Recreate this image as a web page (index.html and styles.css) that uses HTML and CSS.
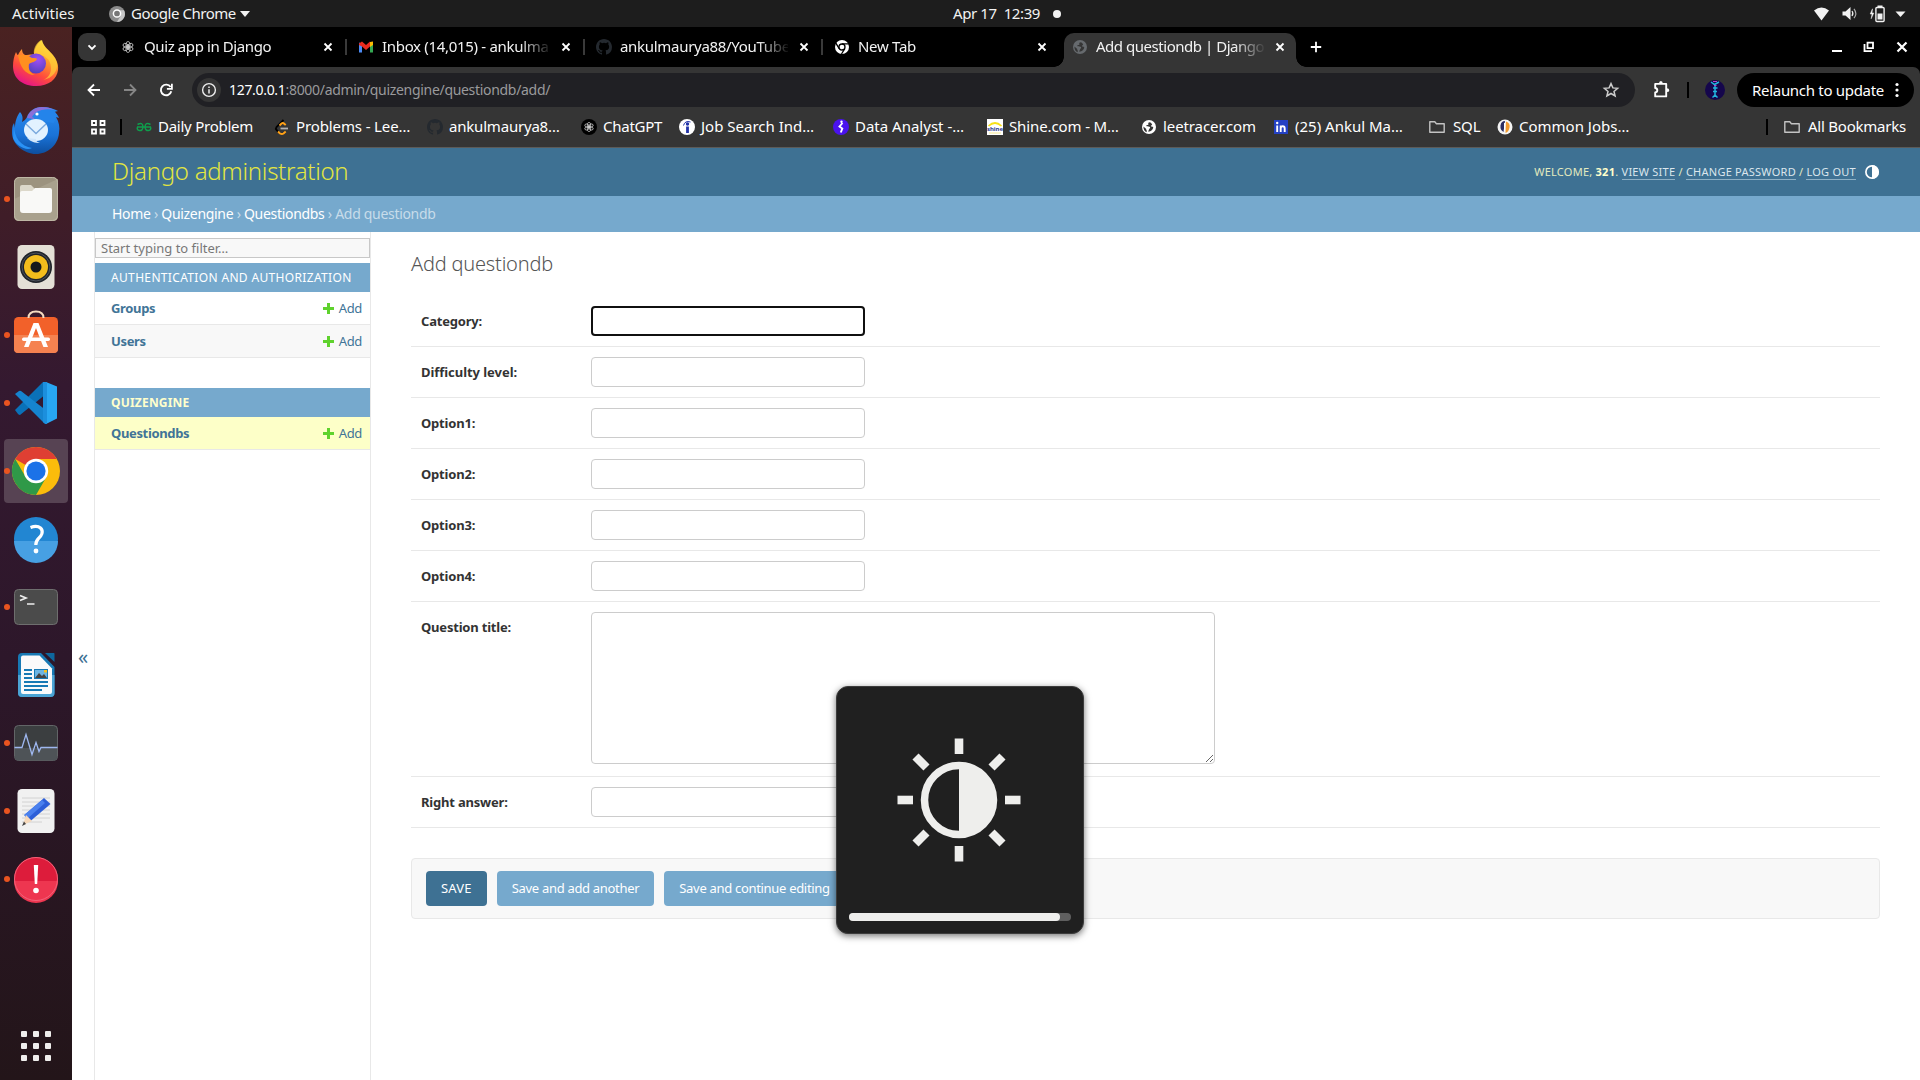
FILE: index.html
```html
<!DOCTYPE html>
<html lang="en">
<head>
<meta charset="utf-8">
<title>Add questiondb | Django site admin</title>
<link rel="stylesheet" href="styles.css">
</head>
<body>
<svg width="0" height="0" class="defs" aria-hidden="true">
  <defs>
    <linearGradient id="ffBody" x1="0.8" y1="0" x2="0.3" y2="1"><stop offset="0" stop-color="#fff44f"/><stop offset=".35" stop-color="#ffa52a"/><stop offset=".7" stop-color="#ff4a3d"/><stop offset="1" stop-color="#e3128b"/></linearGradient>
    <radialGradient id="ffCore" cx=".6" cy=".3" r=".8"><stop offset="0" stop-color="#a04ff5"/><stop offset="1" stop-color="#4a3fb5"/></radialGradient>
    <linearGradient id="tbBody" x1="0" y1="0" x2="0" y2="1"><stop offset="0" stop-color="#2a8cf0"/><stop offset=".6" stop-color="#1a73d8"/><stop offset="1" stop-color="#0d4e9e"/></linearGradient>
    <symbol id="gpt" viewBox="0 0 16 16"><g fill="none" stroke="currentColor" stroke-width="1"><ellipse cx="8" cy="5.200" rx="2.500" ry="4"/><ellipse cx="8" cy="5.200" rx="2.500" ry="4" transform="rotate(60 8 8)"/><ellipse cx="8" cy="5.200" rx="2.500" ry="4" transform="rotate(120 8 8)"/><ellipse cx="8" cy="5.200" rx="2.500" ry="4" transform="rotate(180 8 8)"/><ellipse cx="8" cy="5.200" rx="2.500" ry="4" transform="rotate(240 8 8)"/><ellipse cx="8" cy="5.200" rx="2.500" ry="4" transform="rotate(300 8 8)"/></g></symbol>
    <symbol id="github" viewBox="0 0 16 16"><path fill="currentColor" d="M8 0C3.58 0 0 3.58 0 8c0 3.54 2.29 6.53 5.47 7.59.4.07.55-.17.55-.38v-1.49c-2.01.37-2.53-.49-2.69-.94-.09-.23-.48-.94-.82-1.13-.28-.15-.68-.52-.01-.53.63-.01 1.08.58 1.23.82.72 1.21 1.87.87 2.33.66.07-.52.28-.87.51-1.07-1.78-.2-3.64-.89-3.64-3.95 0-.87.31-1.59.82-2.15-.08-.2-.36-1.02.08-2.12 0 0 .67-.21 2.2.82a7.6 7.6 0 0 1 4 0c1.53-1.04 2.2-.82 2.2-.82.44 1.1.16 1.92.08 2.12.51.56.82 1.27.82 2.15 0 3.07-1.87 3.75-3.65 3.95.29.25.54.73.54 1.48v2.2c0 .21.15.46.55.38A8 8 0 0 0 16 8c0-4.42-3.58-8-8-8z"/></symbol>
    <symbol id="globe" viewBox="0 0 16 16"><circle cx="8" cy="8" r="7" fill="currentColor"/><path class="globe-land" d="M9 3.2c-1.700 0-2 1-1.600 1.700.4.700-.4 1.100-1.400 1.100-.8 0-.8.900-.3 1.300.8.600 2.800 0 3.300.800.500.8-.2 1.300-.700 1.900-.5.600-.5 1.700-1.300 2.500.3.200 2.500.3 4-1.500.9-1.100 1.200-2 1.200-3-.6-.4-1.700-.3-2.200-.8-.5-.5.300-1.300 1.200-1.300-.4-1.300-1.200-2.200-2.200-2.700z"/><path class="globe-land" d="M2.400 7.500l2.600 2.200c.4.400 0 1.200.7 1.600v1.900c-2-.8-3.400-2.800-3.300-5.700z"/></symbol>
    <symbol id="folder" viewBox="0 0 16 16"><path d="M.8 3v10.200h14.400V4.700H7.400L5.800 2.800H.8z" fill="none" stroke="currentColor" stroke-width="1.400" stroke-linejoin="round"/></symbol>
    <symbol id="cross" viewBox="0 0 16 16"><path d="M4.500 4.500l7 7M11.500 4.500l-7 7" stroke="currentColor" stroke-width="1.800"/></symbol>
    <symbol id="plus" viewBox="0 0 11 11"><path d="M4 0h3v4h4v3H7v4H4V7H0V4h4z" fill="#5fd22d"/></symbol>
  </defs>
</svg>

<header class="panel">
  <span class="activities">Activities</span>
  <svg class="panel-app" viewBox="0 0 16 16"><circle cx="8" cy="8" r="8" fill="#8b8b8b"/><path d="M8 4.200h7a8 8 0 0 1-7 11.800l3.500-6z" fill="#c4c4c4"/><circle cx="8" cy="7.500" r="3.600" fill="#777" stroke="#fff" stroke-width="1.500"/></svg>
  <span class="app-name">Google Chrome</span>
  <svg class="panel-caret" viewBox="0 0 10 6"><path d="M0 0h10L5 6z" fill="#f2f2f2"/></svg>
  <span class="clock">Apr 17&nbsp; 12:39</span>
  <span class="notice"></span>
  <svg class="sys-icons" viewBox="0 0 94 18">
    <g fill="#f2f2f2"><path d="M0 5.500Q7.500-.5 15 5.500L7.500 15.500z"/><path d="M28.500 6.500h3l5-4.500v13l-5-4.500h-3z"/><path d="M58.500 3.800l-2.300 5.200h1.800l-.8 4.700 2.600-5.700h-1.800z" stroke="#f2f2f2" stroke-width=".5"/><path d="M63.500 8.500h5v6h-5zM63.500 .5h5V2h-5z"/><path d="M81.500 6.500h10L86.500 12z"/></g>
    <g fill="none" stroke="#f2f2f2"><path d="M38 6q1.800 2.500 0 5" stroke-width="1.200"/><path d="M40 3.800q3.600 4.700 0 9.400" stroke="#aaa" stroke-width="1.200"/><rect x="61.900" y="2.500" width="8.200" height="14" rx="1" stroke-width="1.400"/></g>
  </svg>
</header>

<div class="desktop">
<nav class="dock">
  <div class="launcher"><svg viewBox="0 0 48 48"><path d="M4 13c1 2 1 3 2 3 1-2 2-4 4-6 0 3 1 5 3 6 4 0 7-1 9 0 0-6 3-12 8-15 1 6 6 9 10 14 3 4 7 9 6 16-1 9-9 16-22 16S1 40 1 27c0-5 1-10 3-14z" fill="url(#ffBody)"/><path d="M29 1c-5 3-8 9-7 14 10 0 17 5 17 14 0 6-3 10-8 12 10-2 15-9 14-17-1-10-12-11-16-23z" fill="#ffd53a" opacity=".65"/><circle cx="24" cy="24.500" r="10" fill="url(#ffCore)"/><path d="M6 16c5-1 11 0 14 3 3 0 5 0 5 1-1 3-5 3-8 5-1 5 1 9 6 11-10 0-15-8-17-20z" fill="#ff8f20"/></svg></div>
  <div class="launcher"><svg viewBox="0 0 48 48"><path d="M8 5c3 3 3 7 2 10 2-1 4-3 5-5C17 4 23 0 30 0c7 0 12 2 16 4l-4 1c2 1 4 3 5 6l-3-1c3 5 4 10 3 16-1 12-11 21-23 21S0 37 0 26c0-4 0-7 2-10l1 5C3 14 5 9 8 5z" fill="url(#tbBody)"/><path d="M15 11c2-7 8-11 15-11 5 0 9 1 12 3-9-2-15 0-20 9z" fill="#8a6fd8"/><path d="M20 10c3-6 10-9 22-7l3 5-3 8-14-2z" fill="#2484ea"/><ellipse cx="24" cy="23" rx="12" ry="11" fill="#e2f2ff"/><path d="M14 17l10 9.500L34 17" fill="none" stroke="#7aa9dd" stroke-width="1.400"/><path d="M15 31c4 4 8 5 13 5-3-1-4-2-4-4z" fill="#d0e6fb"/><circle cx="25" cy="7" r="1.600" fill="#fff"/><path d="M2 18c0 13 7 21 18 23-6 3-16-2-19-10z" fill="#2a92f5"/></svg></div>
  <div class="launcher running"><svg viewBox="0 0 48 48"><rect x="2" y="2" width="44" height="44" rx="5" fill="#9c937f"/><path d="M2 24L46 4v37q0 5-5 5H7q-5 0-5-5z" fill="#a9a18d"/><rect x="2.500" y="2.500" width="43" height="43" rx="5" fill="none" stroke="#bfb8a6"/><path d="M8 12q0-2 2-2h9l4 4v6H8z" fill="#dcd8ca"/><path d="M8 18q0-2 2-2h10l3-3h15q2 0 2 2v20q0 3-3 3H11q-3 0-3-3z" fill="#f9f9f7"/></svg></div>
  <div class="launcher"><svg viewBox="0 0 48 48"><rect x="5.500" y="2" width="37" height="44" rx="4.500" fill="#e4e0d6"/><circle cx="24" cy="24" r="16" fill="#20242a"/><circle cx="24" cy="24" r="14" fill="none" stroke="#4d535c"/><circle cx="24" cy="24" r="12" fill="#f3bd1c"/><circle cx="24" cy="24" r="5.500" fill="#17191c"/></svg></div>
  <div class="launcher running"><svg viewBox="0 0 48 48"><rect x="2" y="6" width="44" height="36" rx="4.500" fill="#f2612a" /><path d="M2 24h44v14q0 4-4 4H6q-4 0-4-4z" fill="#f58250"/><path d="M16.500 7q0-6.500 7.500-6.500T31.500 7" fill="none" stroke="#f6dcc0" stroke-width="2"/><path d="M21.500 12h5l9.500 24h-4.600L24 17l-7.400 19H12z" fill="#fff"/><rect x="10" y="26.500" width="28" height="3.500" rx="1.700" fill="#fff"/></svg></div>
  <div class="launcher running"><svg viewBox="0 0 48 48"><path d="M3 31l28-28 3 12-26 21q-1 0-2-1z" fill="#0a71b8"/><path d="M3 15l4-3q1-.5 2 0l26 20-3 12z" fill="#1584cf"/><path d="M34 3l11 4.500v32L34 45V3z" fill="#28a7f3"/><path d="M31 3h4v42h-2l-2-2z" fill="#1c8fdd"/></svg></div>
  <div class="launcher running focused"><svg viewBox="0 0 48 48"><circle cx="24" cy="24" r="24" fill="#fbbc0b"/><path d="M24 24L3.200 12A24 24 0 0 1 44.800 12H24z" fill="#df3f33"/><path d="M3.200 12A24 24 0 0 0 24 48l10.400-18L24 36 13.600 30z" fill="#2f9948"/><circle cx="24" cy="24" r="12.200" fill="#fff"/><circle cx="24" cy="24" r="9.600" fill="#1b72e8"/></svg></div>
  <div class="launcher"><svg viewBox="0 0 48 48"><circle cx="24" cy="24" r="22" fill="#2286d2"/><path d="M2 26a22 22 0 0 0 44 0z" fill="#47a0e3"/><path d="M18.500 12.500q6.500-2.500 10 .5c3.500 3.500 1 8-2 10.500-2 2-2.700 3-2.700 6.500" fill="none" stroke="#fff" stroke-width="3.200"/><circle cx="24" cy="36" r="2.400" fill="#fff"/></svg></div>
  <div class="launcher running"><svg viewBox="0 0 48 48"><rect x="2.500" y="6.500" width="43" height="35" rx="4" fill="#4b4b4b" stroke="#6e6e6e"/><path d="M8 12.500l6 2.500-6 2.500M15 21h7.500" fill="none" stroke="#eee" stroke-width="1.700"/></svg></div>
  <div class="launcher"><svg viewBox="0 0 48 48"><path d="M10 2h19l13.500 14v26q0 4-4 4H10q-4 0-4-4V6q0-4 4-4z" fill="#1779b4"/><path d="M33 2h9q.5 0 .5 1v8z" fill="#0e679e"/><path d="M6 24h36.500v18q0 4-4 4H10q-4 0-4-4z" fill="#4ba4d4"/><path d="M11 4.500h16.500L40 17.500V41q0 2-2 2H11q-2 0-2-2V6.500q0-2 2-2z" fill="#fafafa"/><path d="M12 19h8M12 23h8M12 27h8M12 31h24M12 35h24M12 39h18" stroke="#1779b4" stroke-width="1.900"/><rect x="22.500" y="18.500" width="13" height="9" fill="#6cb5e3" stroke="#1779b4"/><path d="M23 27l4-5 3 3 2-2 3 4z" fill="#444"/><rect x="32" y="19" width="3" height="2.500" fill="#f6c01d"/></svg></div>
  <div class="launcher running"><svg viewBox="0 0 48 48"><rect x="2.500" y="6.500" width="43" height="35" rx="4" fill="#3b3e40" stroke="#626567"/><path d="M3 29h42v9q0 3.500-4 3.500H7q-4 0-4-3.500z" fill="#4e5357"/><path d="M2.500 28.500H10l4-13 6 20 4-12 3 9 2-4h16.500" fill="none" stroke="#9eb7ef" stroke-width="1.300"/></svg></div>
  <div class="launcher running"><svg viewBox="0 0 48 48"><rect x="5.500" y="2" width="37" height="44" rx="4.500" fill="#f1f1f1"/><path d="M10 11h28M10 15h28M10 19h28M10 23h28M10 27h28M10 31h28M10 35h20" stroke="#d2d2d2"/><path d="M32 11l6.500 6-20 17-6-6z" fill="#2d5fd8"/><path d="M30 13l3 3-18 16-3-4z" fill="#4a80ee"/><path d="M14 28l6 6-9 4z" fill="#f6d9bb"/><path d="M12 34.500l2 2.500-4 2z" fill="#444"/></svg></div>
  <div class="launcher running"><svg viewBox="0 0 48 48"><circle cx="24" cy="24" r="22" fill="#dd1c3b"/><path d="M2 26a22 22 0 0 0 44 0z" fill="#ee3650"/><circle cx="24" cy="24" r="21.500" fill="none" stroke="#f2637a"/><path d="M21.800 10h4.400l-1 19h-2.400z" fill="#fff"/><circle cx="24" cy="35.500" r="2.800" fill="#fff"/></svg></div>
  <svg class="app-grid" viewBox="0 0 30 30"><g fill="#efeeec"><rect width="6" height="6" rx="1"/><rect x="12" width="6" height="6" rx="1"/><rect x="24" width="6" height="6" rx="1"/><rect y="12" width="6" height="6" rx="1"/><rect x="12" y="12" width="6" height="6" rx="1"/><rect x="24" y="12" width="6" height="6" rx="1"/><rect y="24" width="6" height="6" rx="1"/><rect x="12" y="24" width="6" height="6" rx="1"/><rect x="24" y="24" width="6" height="6" rx="1"/></g></svg>
</nav>

<div class="browser">
  <div class="tabstrip">
    <span class="tab-search"><svg viewBox="0 0 16 16"><path d="M4.500 6.300L8 9.800l3.500-3.500" fill="none" stroke="#fff" stroke-width="1.900"/></svg></span>
    <div class="tab"><svg class="fav pale"><use href="#gpt" x="1.500" y="1.500" width="13" height="13"/></svg><span class="tab-title t-quiz">Quiz app in Django</span><svg class="close"><use href="#cross"/></svg></div>
    <div class="tab"><svg class="fav" viewBox="0 0 16 16"><path d="M1 3v10.500h3V7z" fill="#4c8bf5"/><path d="M12 13.500h3V3l-3 4z" fill="#34a853"/><path d="M1 4.500L4 2.500l4 3.500 4-3.500v5L8 11 4 7.500 1 6z" fill="#ea2b1f"/><path d="M12 3l3-.5V6l-3 2z" fill="#fbbc04"/></svg><span class="tab-title t-inbox">Inbox (14,015) - ankulma</span><svg class="close"><use href="#cross"/></svg></div>
    <div class="tab"><svg class="fav ink"><use href="#github" width="16" height="16"/></svg><span class="tab-title t-yt">ankulmaurya88/YouTube</span><svg class="close"><use href="#cross"/></svg></div>
    <div class="tab last"><svg class="fav" viewBox="0 0 16 16"><circle cx="8" cy="8" r="7" fill="#fff"/><circle cx="8" cy="8" r="3" fill="#fff" stroke="#000" stroke-width="1.300"/><path d="M8 4.800h7M5.200 9.700L1.700 3.800M10.800 9.700L7.500 15" stroke="#000" stroke-width="1.300"/></svg><span class="tab-title t-new">New Tab</span><svg class="close"><use href="#cross"/></svg></div>
    <div class="tab active"><svg class="fav dim"><use href="#globe" width="16" height="16"/></svg><span class="tab-title t-add">Add questiondb | Django</span><svg class="close"><use href="#cross"/></svg></div>
    <svg class="newtab" viewBox="0 0 16 16"><path d="M8 2.800v10.400M2.800 8h10.400" stroke="#fff" stroke-width="1.800"/></svg>
    <svg class="winctl" viewBox="0 0 76 16"><path d="M1 12h10" stroke="#fff" stroke-width="2"/><path d="M36.500 3.700h5.500v5.500h-5.500z" fill="none" stroke="#fff" stroke-width="1.800"/><path d="M33.500 5v7.200h7.500" fill="none" stroke="#fff" stroke-width="1.800"/><path d="M66.500 3.500l9 9M75.500 3.500l-9 9" stroke="#fff" stroke-width="2.200"/></svg>
  </div>

  <div class="chrome-top">
    <div class="toolbar">
      <svg class="nav" viewBox="0 0 20 20"><path d="M16 10H5M10 4.500L4.500 10l5.500 5.500" fill="none" stroke="#fff" stroke-width="1.800"/></svg>
      <svg class="nav" viewBox="0 0 20 20"><path d="M4 10h11M10 4.500l5.500 5.500-5.500 5.500" fill="none" stroke="#868686" stroke-width="1.800"/></svg>
      <svg class="nav" viewBox="0 0 20 20"><path d="M14.600 7A5.300 5.300 0 1 0 15.300 11.300" fill="none" stroke="#fff" stroke-width="1.900"/><path d="M15.900 3.800v5h-5" fill="none" stroke="#fff" stroke-width="1.800"/></svg>
      <div class="omnibox">
        <span class="info"><svg viewBox="0 0 16 16"><circle cx="8" cy="8" r="6.400" fill="none" stroke="#eee" stroke-width="1.400"/><path d="M8 7.200v4.200M8 4.500v1.500" stroke="#eee" stroke-width="1.500"/></svg></span>
        <span class="url"><b>127.0.0.1</b>:8000/admin/quizengine/questiondb/add/</span>
        <svg class="star" viewBox="0 0 20 20"><path d="M10 3.600l1.900 4.300 4.700.4-3.600 3.100 1.100 4.600-4.100-2.500L5.900 16 7 11.400 3.400 8.300l4.700-.4z" fill="none" stroke="#ccc" stroke-width="1.500"/></svg>
      </div>
      <svg class="ext" viewBox="0 0 20 20"><path d="M4.200 3.900h11v12.500h-11v-4q2.100-.3 2.100-2.200T4.200 8z" fill="none" stroke="#fff" stroke-width="1.900" stroke-linejoin="round"/><path d="M8 3.700q0-2.600 1.900-2.600T11.800 3.700zM15.700 8.300q2.600 0 2.600 1.900t-2.600 1.900z" fill="#fff"/></svg>
      <span class="rule r-tool"></span>
      <svg class="avatar" viewBox="0 0 20 20"><circle cx="10" cy="10" r="10" fill="#15064c"/><path d="M6 2l3.500 2.500L14 2M10 4v13M8 8h4.500M8 11.500h4M7.500 17.500L10 15l2.500 2.500" stroke="#22b4dd" stroke-width="1.500" fill="none"/><path d="M8 1.500h4M9 5.500h2.500" stroke="#b645cf"/></svg>
      <span class="relaunch"><span>Relaunch to update</span><svg viewBox="0 0 4 16"><g fill="#fff"><circle cx="2" cy="2.500" r="1.600"/><circle cx="2" cy="8" r="1.600"/><circle cx="2" cy="13.500" r="1.600"/></g></svg></span>
    </div>

    <div class="bookmarks">
      <svg class="apps" viewBox="0 0 16 16"><path d="M2 2h4v4H2zM10.500 2h4v4h-4zM2 10.500h4v4H2zM10.500 10.500h4v4h-4z" fill="none" stroke="#fff" stroke-width="1.800"/></svg>
      <span class="rule r-apps"></span>
      <div class="bm b-daily"><svg viewBox="0 0 16 16"><path d="M1 8h14M1.500 5.500Q6.800 2.500 7 8q-.5 4-3.500 3.500T1.500 8M14.500 5.500Q9.200 2.500 9 8q.5 4 3.500 3.500T14.500 8" fill="none" stroke="#0f9d4c" stroke-width="1.500"/></svg><span>Daily Problem</span></div>
      <div class="bm b-lee"><svg viewBox="0 0 16 16"><path d="M9.500 1L2.500 8q-1.200 1.500 0 3l2 2" fill="none" stroke="#000" stroke-width="1.800"/><path d="M5.500 6.500l2-2q1.500-1 3 .5l1.200 1.200M4 12.500l2 2q2 1 3.500 0l2.200-2" fill="none" stroke="#ffa116" stroke-width="1.900"/><path d="M6.500 9.500H14" stroke="#b3b3b3" stroke-width="1.800"/></svg><span>Problems - Lee…</span></div>
      <div class="bm b-gh"><svg class="ink"><use href="#github" width="16" height="16"/></svg><span>ankulmaurya8…</span></div>
      <div class="bm b-gpt"><svg class="pale"><circle cx="8" cy="8" r="8" fill="#000"/><use href="#gpt" x="2.500" y="2.500" width="11" height="11"/></svg><span>ChatGPT</span></div>
      <div class="bm b-job"><svg viewBox="0 0 16 16"><circle cx="8" cy="8" r="8" fill="#fff"/><circle cx="8.500" cy="5" r="1.700" fill="#2132a8"/><path d="M8.500 7.500V14" stroke="#2132a8" stroke-width="2.800"/><path d="M4.500 6.500Q6 1.200 11.500 3" fill="none" stroke="#2132a8"/></svg><span>Job Search Ind…</span></div>
      <div class="bm b-data"><svg viewBox="0 0 16 16"><circle cx="8" cy="8" r="8" fill="#4a12ee"/><path d="M9.500 4L6.500 7.500l2.800 2-1.500 4" fill="none" stroke="#fff" stroke-width="1.900"/><circle cx="8.500" cy="2.800" r="1.200" fill="#fff"/></svg><span>Data Analyst -…</span></div>
      <div class="bm b-shine"><svg viewBox="0 0 16 16"><path d="M0 0h16v16H0z" fill="#fff"/><path d="M1.500 7Q8 1 14.500 7" fill="none" stroke="#f7e017" stroke-width="1.700"/><text x="8" y="12" class="shine-word">shine</text><path d="M2 14h12" stroke="#f7e98e"/></svg><span>Shine.com - M…</span></div>
      <div class="bm b-race"><svg class="white"><use href="#globe" width="16" height="16"/></svg><span>leetracer.com</span></div>
      <div class="bm b-in"><svg viewBox="0 0 16 16"><path d="M1 1h14v14H1z" fill="#2441c4"/><path d="M4.200 6.500V13M7.700 6.500V13M7.700 9.500q0-2.200 2-2.200t2 2.200V13" fill="none" stroke="#fff" stroke-width="1.900"/><circle cx="4.200" cy="4" r="1.200" fill="#fff"/></svg><span>(25) Ankul Ma…</span></div>
      <div class="bm b-sql"><svg class="fold"><use href="#folder" width="16" height="16"/></svg><span>SQL</span></div>
      <div class="bm b-com"><svg viewBox="0 0 16 16"><circle cx="8" cy="8" r="7.500" fill="#f4f4f4"/><path d="M8 2q-4 0-4.500 4.500T6.500 13z" fill="#2c2d62"/><path d="M9 2.500q4.500 1.500 3.500 6T8.500 14z" fill="#f29a2e"/><path d="M7.500 4v8" stroke="#fff"/></svg><span>Common Jobs…</span></div>
      <span class="rule r-all"></span>
      <div class="bm b-all"><svg class="fold"><use href="#folder" width="16" height="16"/></svg><span>All Bookmarks</span></div>
    </div>
  </div>

  <div class="page">
    <div class="site-header">
      <h1>Django administration</h1>
      <div class="user-tools">
        <p>Welcome, <strong>321</strong>. <a>View site</a> / <a>Change password</a> / <a>Log out</a></p>
        <svg class="theme" viewBox="0 0 14 14"><circle cx="7" cy="7" r="6.100" fill="none" stroke="#fff" stroke-width="1.700"/><path d="M7 0a7 7 0 0 1 0 14z" fill="#fff"/></svg>
      </div>
    </div>
    <div class="crumbs"><a>Home</a> › <a>Quizengine</a> › <a>Questiondbs</a> › <span>Add questiondb</span></div>
    <div class="main">
      <button class="toggle">«</button>
      <nav class="sidebar">
        <input class="filter" type="text" placeholder="Start typing to filter…">
        <section class="module">
          <h2 class="auth">Authentication and Authorization</h2>
          <div class="model"><a class="name">Groups</a><a class="add"><svg><use href="#plus" width="11" height="11"/></svg>Add</a></div>
          <div class="model odd"><a class="name">Users</a><a class="add"><svg><use href="#plus" width="11" height="11"/></svg>Add</a></div>
        </section>
        <section class="module">
          <h2 class="current">Quizengine</h2>
          <div class="model current-model"><a class="name">Questiondbs</a><a class="add"><svg><use href="#plus" width="11" height="11"/></svg>Add</a></div>
        </section>
      </nav>
      <main class="content">
        <h1 class="title">Add questiondb</h1>
        <div class="row"><label>Category:</label><input class="field focus" type="text"></div>
        <div class="row"><label class="wide">Difficulty level:</label><input class="field" type="text"></div>
        <div class="row"><label>Option1:</label><input class="field" type="text"></div>
        <div class="row"><label>Option2:</label><input class="field" type="text"></div>
        <div class="row"><label>Option3:</label><input class="field" type="text"></div>
        <div class="row"><label>Option4:</label><input class="field" type="text"></div>
        <div class="row tall"><label>Question title:</label><textarea class="field area"></textarea></div>
        <div class="row"><label>Right answer:</label><input class="field" type="text"></div>
        <div class="submit-row"><button class="btn primary">SAVE</button><button class="btn">Save and add another</button><button class="btn">Save and continue editing</button></div>
      </main>
    </div>
  </div>
</div>
</div>

<div class="osd">
  <svg class="sun" viewBox="0 0 124 124">
    <circle cx="62" cy="62" r="34.500" fill="none" stroke="#eeeeec" stroke-width="7.500"/><path d="M62 26a36 36 0 0 1 0 72z" fill="#eeeeec"/>
    <g fill="#eeeeec"><rect id="ray" x="57.700" y=".5" width="8.600" height="15.500"/><use href="#ray" transform="rotate(45 62 62)"/><use href="#ray" transform="rotate(90 62 62)"/><use href="#ray" transform="rotate(135 62 62)"/><use href="#ray" transform="rotate(180 62 62)"/><use href="#ray" transform="rotate(225 62 62)"/><use href="#ray" transform="rotate(270 62 62)"/><use href="#ray" transform="rotate(315 62 62)"/></g>
  </svg>
  <div class="level"><div class="level-fill"></div></div>
</div>
</body>
</html>
```
FILE: styles.css
```css
* { box-sizing: border-box; }
body { margin: 0; width: 1920px; height: 1080px; overflow: hidden; background: #fff; font-family: "Noto Sans", "Open Sans", sans-serif; display: flex; flex-direction: column; }
svg { display: block; flex: none; overflow: visible; }
h1, h2, p { margin: 0; }
button, input, textarea { font-family: inherit; margin: 0; }
.defs { position: absolute; }

/* Desktop top panel */
.panel { flex: none; height: 27px; background: #1d1d1d; color: #f2f2f2; display: flex; align-items: center; padding-left: 12px; font-size: 15px; line-height: 24px; white-space: nowrap; }
.panel > span { padding-bottom: 2px; }
.activities { width: 97px; }
.panel-app { width: 16px; height: 16px; margin-right: 6px; }
.app-name { width: 109px; letter-spacing: -0.45px; }
.panel-caret { width: 10px; height: 6px; margin-right: 703px; }
.clock { width: 100px; letter-spacing: -0.4px; }
.panel > .notice { width: 8px; height: 8px; padding: 0; border-radius: 50%; background: #f2f2f2; }
.sys-icons { width: 94px; height: 18px; margin-left: 753px; }

.desktop { flex: 1; display: flex; min-height: 0; }

/* Dock */
.dock { width: 72px; padding-top: 4px; display: flex; flex-direction: column; background: linear-gradient(180deg, #4a2221 0, #3f1d28 18%, #341930 34%, #2d172a 60%, #231519 100%); }
.launcher { height: 64px; margin: 0 4px 4px; border-radius: 4px; display: flex; align-items: center; justify-content: center; position: relative; }
.launcher svg { width: 48px; height: 48px; }
.launcher.focused { background: #574353; }
.launcher.running::before { content: ""; position: absolute; left: 0; top: 29px; width: 6px; height: 6px; border-radius: 50%; background: #e95420; }
.app-grid { width: 30px; height: 30px; margin: 116px 0 0 21px; }

/* Browser tabs */
.browser { flex: 1; background: #000; display: flex; flex-direction: column; min-width: 0; }
.tabstrip { height: 40px; flex: none; display: flex; align-items: center; padding-left: 6px; color: #fff; }
.tab-search { width: 28px; height: 28px; margin-right: 4px; border-radius: 9px; background: #353535; display: flex; align-items: center; justify-content: center; }
.tab-search svg { width: 16px; height: 16px; }
.tab { width: 238px; height: 40px; padding-left: 10px; display: flex; align-items: center; position: relative; }
.tab::after { content: ""; position: absolute; right: 1px; top: 12px; width: 2px; height: 16px; background: #3a3a3a; }
.tab.last::after { display: none; }
.fav { width: 16px; height: 16px; margin-right: 8px; z-index: 1; }
.tab-title { width: 168px; white-space: nowrap; font-size: 15px; line-height: 22px; padding-bottom: 2px; color: #f2f2f2; z-index: 1; -webkit-mask-image: linear-gradient(90deg, #000 138px, transparent 170px); mask-image: linear-gradient(90deg, #000 138px, transparent 170px); }
.t-quiz { letter-spacing: -0.4px; }
.t-inbox { letter-spacing: -0.31px; }
.t-yt { letter-spacing: -0.3px; }
.t-new { letter-spacing: -0.3px; }
.t-add { letter-spacing: -0.47px; }
.close { width: 16px; height: 16px; margin-left: 8px; z-index: 1; }
.tab.active::before { content: ""; position: absolute; left: 2px; right: 4px; top: 6px; bottom: 0; background: #353535; border-radius: 10px 10px 0 0; }
.tab.active::after { left: -8px; right: -6px; width: auto; top: 30px; height: 10px; background: radial-gradient(circle at 0 0, transparent 9.5px, #353535 10px) left / 10px 10px no-repeat, radial-gradient(circle at 100% 0, transparent 9.5px, #353535 10px) right / 10px 10px no-repeat; }
.newtab { width: 16px; height: 16px; margin-left: 8px; }
.winctl { width: 76px; height: 16px; margin-left: 507px; }
.pale { color: #d0d0d0; }
.ink { color: #24292f; }
.dim { color: #666a6e; }
.white { color: #fff; }
.fold { color: #c3c3c3; }
.globe-land { fill: #353535; }

/* Toolbar */
.chrome-top { flex: none; height: 81px; background: #353535; border-bottom: 1px solid #5c5b59; border-radius: 7px 7px 0 0; }
.toolbar { height: 40px; padding: 6px 0 0 12px; display: flex; align-items: center; }
.nav { width: 20px; height: 20px; margin-right: 16px; }
.omnibox { width: 1443px; height: 34px; border-radius: 17px; background: #202024; display: flex; align-items: center; padding: 0 14px 0 5px; }
.info { width: 24px; height: 24px; border-radius: 50%; background: #353535; display: flex; align-items: center; justify-content: center; margin-right: 8px; }
.info svg { width: 16px; height: 16px; }
.url { flex: 1; font-size: 14px; letter-spacing: -0.31px; color: #9a9a9c; padding-bottom: 2px; }
.url b { font-weight: 400; color: #fff; }
.star { width: 20px; height: 20px; }
.ext { width: 20px; height: 20px; margin: 0 16px; }
.rule { width: 2px; height: 16px; background: #000; flex: none; }
.avatar { width: 20px; height: 20px; margin: 0 12px 0 16px; }
.relaunch { width: 177px; height: 34px; border-radius: 17px; background: #000; color: #fff; font-size: 15px; letter-spacing: -0.3px; display: flex; align-items: center; padding-left: 15px; white-space: nowrap; }
.relaunch span { width: 143px; padding-bottom: 1px; }
.relaunch svg { width: 4px; height: 16px; }

/* Bookmarks bar */
.bookmarks { height: 39px; display: flex; align-items: center; padding-left: 18px; color: #fff; font-size: 15px; letter-spacing: -0.12px; white-space: nowrap; }
.apps { width: 16px; height: 16px; }
.r-apps { margin: 0 14px; }
.bm { display: flex; align-items: center; gap: 6px; }
.bm svg { width: 16px; height: 16px; }
.bm span { padding-bottom: 1px; }
.b-daily { width: 138px; letter-spacing: -0.25px; }
.b-lee { width: 153px; }
.b-gh { width: 154px; letter-spacing: -0.2px; }
.b-gpt { width: 98px; letter-spacing: -0.25px; }
.b-job { width: 154px; letter-spacing: 0; }
.b-data { width: 154px; letter-spacing: 0; }
.b-shine { width: 154px; }
.b-race { width: 132px; letter-spacing: -0.1px; }
.b-in { width: 156px; letter-spacing: 0; }
.b-sql { width: 68px; gap: 8px; }
.b-com { width: 269px; letter-spacing: 0; }
.r-all { margin-right: 16px; }
.b-all { gap: 8px; letter-spacing: -0.23px; }
.shine-word { font-size: 6px; font-weight: 700; fill: #2b3a8f; text-anchor: middle; letter-spacing: 0; }

/* Django admin page */
.page { flex: 1; background: #fff; display: flex; flex-direction: column; min-height: 0; }
.site-header { flex: none; height: 48px; background: #3e7193; padding: 0 41px 0 40px; display: flex; align-items: center; justify-content: space-between; }
.site-header h1 { font-weight: 300; font-size: 24px; letter-spacing: -0.28px; color: #e3e640; line-height: 30px; padding-bottom: 2px; }
.user-tools { font-size: 11px; letter-spacing: 0.25px; text-transform: uppercase; color: #e3eabf; display: flex; align-items: center; gap: 9px; line-height: 13px; white-space: nowrap; }
.user-tools p { padding-bottom: 2px; }
.user-tools strong { color: #ffc; }
.user-tools a { color: #dbe6ed; border-bottom: 1px solid #8db0c5; }
.theme { width: 14px; height: 14px; }
.crumbs { flex: none; height: 36px; background: #76a9cd; padding-left: 40px; font-size: 14px; line-height: 35px; letter-spacing: -0.31px; color: #c7dcea; }
.crumbs a { color: #fff; }
.main { flex: 1; display: flex; min-height: 0; }
.toggle { width: 23px; padding: 0; border: 0; border-right: 1px solid #e8e8e8; background: #fff; color: #3e7193; font-size: 20px; }
.sidebar { width: 276px; border-right: 1px solid #e8e8e8; padding-top: 6px; }
.filter { display: block; width: 275px; height: 20px; border: 1px solid #c8c8c8; background: #f8f8f8; padding: 0 5px; font-size: 13px; letter-spacing: 0; margin-bottom: 5px; }
.filter::placeholder { color: #777; }
.module { margin-bottom: 30px; }
.module h2 { height: 29px; line-height: 29px; padding-left: 16px; background: #76a9cd; color: #fff; font-size: 12px; font-weight: 400; text-transform: uppercase; letter-spacing: 0.34px; white-space: nowrap; }
.module h2.current { color: #ffc; font-weight: 700; letter-spacing: 0.2px; }
.model { height: 33px; border-bottom: 1px solid #e8e8e8; padding: 0 8px 0 16px; display: flex; align-items: center; justify-content: space-between; font-size: 13px; letter-spacing: -0.35px; color: #417497; }
.model.odd { background: #f8f8f8; }
.model.current-model { background: #fdffc8; }
.name { font-weight: 700; }
.add { display: flex; align-items: center; gap: 5px; }
.add svg { width: 11px; height: 11px; }
.content { width: 1509px; padding: 20px 0 0 40px; }
.content .title { font-size: 20px; font-weight: 300; letter-spacing: -0.2px; color: #555; line-height: 24px; margin-bottom: 20px; }
.row { height: 51px; border-bottom: 1px solid #e8e8e8; padding: 10px; display: flex; }
.row.tall { height: 175px; }
label { width: 170px; font-size: 13px; line-height: 30px; font-weight: 700; color: #333; letter-spacing: -0.2px; }
label.wide { letter-spacing: -0.05px; }
.field { width: 274px; height: 30px; border: 1px solid #ccc; border-radius: 4px; background: #fff; padding: 5px 6px; }
.field.focus { border: 2px solid #101010; }
.area { width: 624px; height: 152px; resize: vertical; }
.submit-row { margin-top: 30px; height: 61px; border: 1px solid #e8e8e8; border-radius: 4px; background: #f8f8f8; padding: 12px 14px; display: flex; gap: 10px; }
.btn { height: 35px; border: 0; border-radius: 4px; background: #76a9cd; color: #fff; font-size: 13px; letter-spacing: -0.31px; padding: 0 15px 2px; white-space: nowrap; }
.btn.primary { background: #3e7193; letter-spacing: 0.2px; }

/* Brightness indicator floating over the desktop */
.osd { position: absolute; left: 836px; top: 686px; width: 248px; height: 248px; border-radius: 12px; background: #202020; border: 1px solid #3c3c3c; box-shadow: 0 2px 7px rgba(0, 0, 0, .55); display: flex; flex-direction: column; align-items: center; }
.sun { width: 124px; height: 124px; margin: 51px 2px 0 0; }
.level { width: 222px; height: 8px; margin-top: 51px; border-radius: 4px; background: #5f5f5f; }
.level-fill { width: 211px; height: 8px; border-radius: 4px; background: #eeeeec; }
```
